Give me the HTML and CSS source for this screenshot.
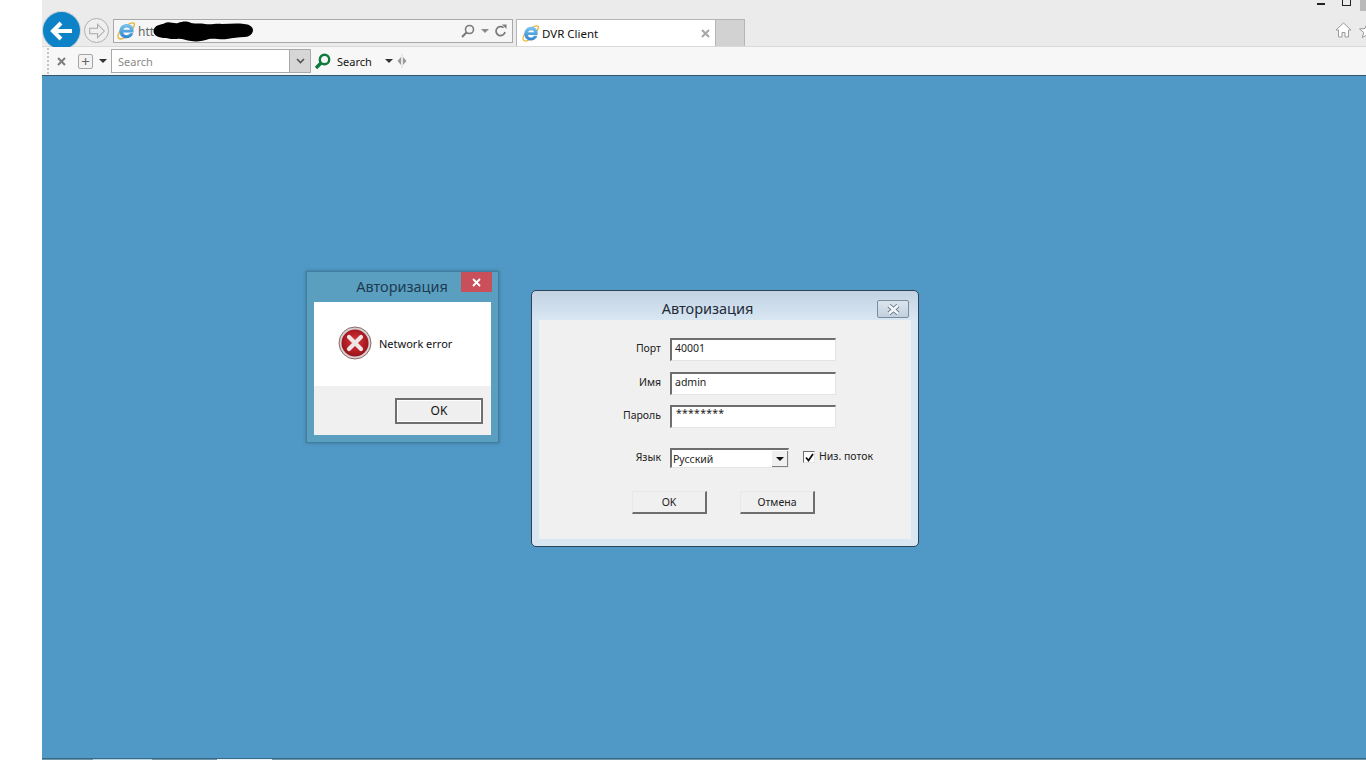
FILE: index.html
```html
<!DOCTYPE html>
<html lang="ru">
<head>
<meta charset="utf-8">
<title>DVR Client</title>
<link rel="stylesheet" href="styles.css">
</head>
<body>
<svg class="defs" width="0" height="0" aria-hidden="true">
  <defs>
    <linearGradient id="ieblue" x1="0" y1="0" x2="0" y2="1"><stop offset="0" stop-color="#7cc4ee"/><stop offset="1" stop-color="#2c86cf"/></linearGradient>
  </defs>
  <symbol id="ie" viewBox="0 0 18 18">
    <path d="M1.500 16C-.5 13.500 4 6.500 9 3.500c4-2.400 7.500-3.300 8.200-2 .6 1.100-.3 3.200-1.500 4.800" fill="none" stroke="#e6b53c" stroke-width="1.400"/>
    <path d="M1.500 16c1.400 1.500 4.500.8 6.800-.6" fill="none" stroke="#e6b53c" stroke-width="1.400"/>
    <path d="M16.500 10.500H6.300c.2 2.900 4.800 4 6.500.8h3.500c-1.500 5.500-8.600 6.300-11.700 3.200C1.500 11.500 1.800 6.300 5 3.600c3.700-3 9.700-1.700 11.200 2.400.5 1.400.5 3 .3 4.500zM6.400 7.700h6.500c-.5-3-5.700-3-6.500 0z" fill="url(#ieblue)"/>
  </symbol>
</svg>

<div class="page">
  <div class="margin"></div>
  <div class="browser">
    <div class="titlebar">
      <div class="winbuttons">
        <span class="win-min"></span>
        <span class="win-max"></span>
        <span class="win-close"></span>
      </div>
      <div class="navrow">
        <div class="nav-btns">
          <span class="back">
            <svg width="26" height="22" viewBox="0 0 26 22"><path d="M12 3l-8 8 8 8M5 11h18" fill="none" stroke="#fff" stroke-width="4"/></svg>
          </span>
          <span class="forward">
            <svg width="18" height="16" viewBox="0 0 16 14"><path d="M8.500 1l6 6-6 6V9.500H1.500v-5h7z" fill="none" stroke="#a8a8a8" stroke-width=".9"/></svg>
          </span>
        </div>
        <div class="address">
          <svg class="ie" width="18" height="18"><use href="#ie"/></svg>
          <span class="url">htt</span>
          <svg class="redact" width="101" height="23" viewBox="0 0 101 23"><path d="M1 9C3 4 9 5 12 3c4-2 9 1 13 0 5-2 10-2 13 0 5 1 10 0 14 1 6 1 12-1 17 0 7 0 14-1 22 0 5 0 9 3 9 6 0 4-4 7-8 7-7 0-12 1-18 2-7 1-12-1-18 0-6 2-12 3-18 2-5 0-9-3-14-2-4 0-8 0-11-1C4 18-1 14 1 9z" fill="#000"/></svg>
          <div class="addr-tools">
            <svg width="14" height="14" viewBox="0 0 14 14"><circle cx="8.500" cy="5.500" r="4" fill="none" stroke="#7a7a7a" stroke-width="1.600"/><path d="M5.500 8.500L1 13" stroke="#7a7a7a" stroke-width="2.200"/></svg>
            <span class="caret grey"></span>
            <svg width="12" height="14" viewBox="0 0 12 14"><path d="M10 8a4.500 4.500 0 1 1-1.500-4.300" fill="none" stroke="#7a7a7a" stroke-width="1.700"/><path d="M7 .5h4.500V5z" fill="#7a7a7a"/></svg>
          </div>
        </div>
        <div class="tab">
          <svg width="17" height="17"><use href="#ie"/></svg>
          <span class="tab-title">DVR Client</span>
          <svg class="tab-x" width="9" height="9" viewBox="0 0 9 9"><path d="M1 1l7 7M8 1L1 8" stroke="#a6a6a6" stroke-width="2"/></svg>
        </div>
        <div class="newtab"></div>
        <div class="right-icons">
          <svg width="17" height="16" viewBox="0 0 17 16"><path d="M8.500 1L1 8h2.500v7h3.500v-4.500h3V15h3.500V8H16z" fill="#fff" stroke="#9a9a9a"/></svg>
          <svg width="15" height="16" viewBox="0 0 15 16"><path d="M8 1.500l2 5 5.500.4-4.200 3.500 1.400 5.300L8 12.800l-4.700 2.900 1.400-5.300L.5 6.900 6 6.500z" fill="#fff" stroke="#9a9a9a"/></svg>
        </div>
      </div>
    </div>

    <div class="toolbar">
      <span class="grip"></span>
      <svg class="tool-x" width="9" height="9" viewBox="0 0 9 9"><path d="M1 1l7 7M8 1L1 8" stroke="#7d7d7d" stroke-width="2"/></svg>
      <span class="plus-btn">+</span>
      <span class="caret"></span>
      <div class="searchbox">
        <span class="placeholder">Search</span>
        <span class="search-drop"><svg width="9" height="6" viewBox="0 0 9 6"><path d="M1 1l3.500 3.500L8 1" fill="none" stroke="#555" stroke-width="1.600"/></svg></span>
      </div>
      <svg class="loupe" width="17" height="17" viewBox="0 0 17 17"><circle cx="10.500" cy="6.500" r="4.700" fill="none" stroke="#0f7a3c" stroke-width="2.400"/><path d="M7 10l-5 5" stroke="#0f7a3c" stroke-width="3.400"/></svg>
      <span class="search-label">Search</span>
      <span class="caret"></span>
      <svg class="resize" width="10" height="14" viewBox="0 0 10 14"><path d="M4 3v8L.5 7zM6 3v8l3.500-4z" fill="#9a9a9a"/><path d="M5 0v14" stroke="#d8d8d8"/></svg>
    </div>

    <main class="content">
      <section class="win8-dialog">
        <header class="win8-title">
          <span>Авторизация</span>
          <span class="win8-close"><svg width="9" height="9" viewBox="0 0 9 9"><path d="M1 1l7 7M8 1L1 8" stroke="#fff" stroke-width="1.800"/></svg></span>
        </header>
        <div class="win8-body">
          <div class="msg">
            <svg width="34" height="34" viewBox="0 0 34 34">
              <defs><radialGradient id="red" cx="50%" cy="45%" r="55%"><stop offset="0" stop-color="#e0353c"/><stop offset="1" stop-color="#98121a"/></radialGradient></defs>
              <circle cx="17" cy="17" r="16" fill="#d8d0d0" stroke="#8f6a6a"/>
              <circle cx="17" cy="17" r="13.500" fill="url(#red)"/>
              <path d="M11 11l12 12M23 11L11 23" stroke="#efe6e6" stroke-width="4.200" stroke-linecap="round"/>
            </svg>
            <span>Network error</span>
          </div>
          <div class="msg-foot"><button class="w8-ok">OK</button></div>
        </div>
      </section>

      <section class="aero-dialog">
        <header class="aero-title">
          <span>Авторизация</span>
          <span class="aero-close"><svg width="15" height="11" viewBox="0 0 15 11"><path d="M3 1.500l9 8M12 1.500l-9 8" stroke="#6d7a88" stroke-width="4.400"/><path d="M3 1.500l9 8M12 1.500l-9 8" stroke="#f4f7fa" stroke-width="2.600"/></svg></span>
        </header>
        <div class="aero-body">
          <div class="form">
            <label>Порт</label><div class="field">40001</div>
            <label>Имя</label><div class="field">admin</div>
            <label>Пароль</label><div class="field stars">********</div>
          </div>
          <div class="lang-row">
            <label>Язык</label>
            <div class="combo"><span class="combo-text">Русский</span><span class="combo-btn"></span></div>
            <span class="check"><svg width="9" height="9" viewBox="0 0 9 9"><path d="M1 4.500l2.500 3L8 1" fill="none" stroke="#111" stroke-width="1.800"/></svg></span>
            <span class="check-label">Низ. поток</span>
          </div>
          <div class="actions">
            <button class="xp-btn">OK</button>
            <button class="xp-btn">Отмена</button>
          </div>
        </div>
      </section>
    </main>

    <div class="statusbar">
      <span class="seg s1"></span>
      <span class="seg s2"></span>
      <span class="seg s3"></span>
      <span class="seg s4"></span>
      <span class="seg s5"></span>
    </div>
  </div>
</div>
</body>
</html>
```

FILE: styles.css
```css
* { box-sizing: border-box; }
html, body { margin: 0; padding: 0; height: 100%; background: #fff; overflow: hidden; }
body { font-family: "Noto Sans", "Open Sans", sans-serif; color: #1a1a1a; }
.defs { position: absolute; }

.page { display: flex; height: 760px; }
.margin { width: 42px; flex: none; background: #fff; }
.browser { flex: 1; display: flex; flex-direction: column; min-width: 0; position: relative; }

/* window top */
.titlebar { height: 47px; flex: none; background: #ebebeb; border-bottom: 1px solid #d9d9d9; position: relative; }
.winbuttons { position: absolute; top: 0; right: 0; display: flex; align-items: flex-start; }
.win-min { width: 8px; height: 2px; background: #222; margin: 3px 17px 0 0; }
.win-max { width: 9px; height: 6px; border: 1px solid #222; border-top: 0; margin-right: 9px; }
.win-close { width: 6px; height: 11px; background: #b9b9b9; }

.navrow { display: flex; align-items: flex-start; padding-top: 19px; height: 46px; }
.nav-btns { width: 71px; flex: none; position: relative; }
.back {
  position: absolute; left: 1px; top: -7px; width: 37px; height: 37px; border-radius: 50%;
  background: #0d82c6; box-shadow: 0 0 0 1px #c9d3da;
  display: flex; align-items: center; justify-content: center;
}
.forward {
  position: absolute; left: 42px; top: -1px; width: 25px; height: 25px; border-radius: 50%;
  border: 1px solid #b0b0b0; background: #efefef;
  display: flex; align-items: center; justify-content: center;
}
.address {
  width: 400px; height: 24px; flex: none; background: #f6f6f6; border: 1px solid #a9a9a9;
  display: flex; align-items: center; padding-left: 3px; position: relative; font-size: 12px; color: #666;
}
.url { margin-left: 3px; }
.redact { position: absolute; left: 39px; top: 0; }
.addr-tools { margin-left: auto; display: flex; align-items: center; gap: 6px; padding-right: 5px; }
.caret { width: 0; height: 0; border: 4px solid transparent; border-top: 4px solid #333; border-bottom: 0; flex: none; }
.caret.grey { border-top-color: #8a8a8a; }

.tab {
  width: 200px; height: 27px; margin-left: 3px; flex: none; background: #fff;
  border: 1px solid #b5b5b5; border-bottom: 0;
  display: flex; align-items: center; padding: 0 5px 0 5px; font-size: 11.500px; color: #111;
}
.tab-title { margin-left: 3px; }
.tab-x { margin-left: auto; }
.newtab { width: 29px; height: 27px; flex: none; background: #d2d2d2; border: 1px solid #b5b5b5; border-left: 0; border-bottom: 0; }
.right-icons { margin-left: auto; display: flex; gap: 7px; padding-top: 3px; margin-right: -8px; }

/* command bar */
.toolbar { height: 28px; flex: none; background: #f7f7f7; display: flex; align-items: center; position: relative; padding-left: 5px; font-size: 12px; }
.grip { width: 2px; height: 26px; border-left: 2px dotted #c4c4c4; flex: none; }
.tool-x { margin-left: 8px; flex: none; }
.plus-btn {
  width: 15px; height: 15px; margin-left: 12px; border: 1px solid #a5a5a5; border-radius: 2px; background: #f2f2f2;
  display: flex; align-items: center; justify-content: center; font-size: 15px; line-height: 1; color: #666; flex: none;
}
.toolbar > .caret { margin-left: 6px; }
.searchbox {
  width: 200px; height: 24px; margin-left: 4px; flex: none; background: #fff; border: 1px solid #a9a9a9;
  display: flex; align-items: center; padding-left: 6px; font-size: 11px; color: #8a8a8a;
}
.search-drop { margin-left: auto; width: 21px; height: 22px; background: #d6d6d6; border-left: 1px solid #a9a9a9; display: flex; align-items: center; justify-content: center; }
.loupe { margin-left: 3px; flex: none; }
.search-label { margin-left: 6px; font-size: 11px; color: #111; width: 43px; }
.toolbar > .search-label + .caret { margin-left: 5px; }
.resize { margin-left: 4px; flex: none; }

/* desktop area */
.content { flex: 1; background: #5098c5; border-top: 1px solid #33566e; position: relative; min-height: 0; }

.win8-dialog {
  position: absolute; left: 264px; top: 195px; width: 193px; height: 172px;
  background: #5a9fc0; border: 1px solid #3f7f9e; padding: 0 7px 7px; display: flex; flex-direction: column;
  box-shadow: 0 0 3px rgba(40, 70, 90, .5);
}
.win8-title { height: 30px; flex: none; display: flex; justify-content: center; padding: 4px 1px 0 0; font-size: 14.500px; color: #1d3b52; position: relative; }
.win8-close {
  position: absolute; right: -1px; top: 0; width: 31px; height: 20px; background: #c9505a;
  display: flex; align-items: center; justify-content: center;
}
.win8-body { flex: 1; display: flex; flex-direction: column; }
.msg { height: 84px; background: #fff; display: flex; align-items: center; gap: 7px; padding: 0 0 2px 24px; font-size: 11px; color: #111; }
.msg-foot { flex: 1; background: #f0f0f0; display: flex; justify-content: flex-end; align-items: flex-start; padding: 12px 8px 0 0; }
.w8-ok {
  width: 88px; height: 26px; background: #efefef; border: 2px solid #6f6f6f; border-radius: 0;
  box-shadow: inset 0 0 0 1px #fff; font: 12px/20px "Noto Sans", sans-serif; color: #111; padding: 0;
}

.aero-dialog {
  position: absolute; left: 489px; top: 214px; width: 388px; height: 257px;
  background: linear-gradient(#c3d3e3, #d9e7f3 30px); border: 1px solid #2d4356; border-radius: 5px;
  padding: 0 7px 7px; display: flex; flex-direction: column;
}
.aero-title { height: 29px; flex: none; display: flex; justify-content: center; padding: 7px 35px 0 0; font-size: 14.500px; color: #1e2c38; position: relative; }
.aero-close {
  position: absolute; right: 2px; top: 9px; width: 32px; height: 18px; border: 1px solid #7d8c9b; border-radius: 2px;
  background: linear-gradient(#dbe5ee, #c2d0dd); display: flex; align-items: center; justify-content: center;
}
.aero-body { flex: 1; background: #f0f0f0; font-size: 10.500px; color: #222; display: flex; flex-direction: column; padding-top: 18px; }

.form { display: grid; grid-template-columns: 122px 166px; column-gap: 9px; row-gap: 10.500px; align-items: start; }
.form label { text-align: right; padding-top: 3px; }
.field {
  height: 23px; background: #fff; border: 1px solid #e4e4e4; border-top: 2px solid #6e6e6e; border-left: 2px solid #6e6e6e;
  padding: 0 0 0 3px; line-height: 16px; font-size: 10.500px; color: #222;
}
.field.stars { line-height: 12px; padding-left: 4px; letter-spacing: .25px; }

.lang-row { display: flex; align-items: flex-start; margin-top: 20px; }
.lang-row label { width: 122px; text-align: right; padding-top: 2px; flex: none; }
.combo {
  width: 119px; height: 20px; margin-left: 9px; flex: none; background: #fff; border: 1px solid #e4e4e4;
  border-top: 2px solid #6e6e6e; border-left: 2px solid #6e6e6e; display: flex; align-items: center; padding-left: 1px; line-height: 1;
}
.combo-text { padding-top: 2px; }
.combo-btn { margin-left: auto; width: 16px; height: 16px; background: #f0f0f0; position: relative; border-right: 1px solid #808080; border-bottom: 1px solid #808080; flex: none; }
.combo-btn::after { content: ""; position: absolute; left: 4px; top: 6px; border: 4px solid transparent; border-top: 4px solid #111; border-bottom: 0; }
.check {
  width: 12px; height: 12px; margin: 3px 0 0 14px; flex: none; background: #fff; border: 1px solid #e4e4e4;
  border-top: 1px solid #6e6e6e; border-left: 1px solid #6e6e6e; display: flex; align-items: center; justify-content: center;
}
.check-label { margin-left: 4px; padding-top: 1px; }

.actions { display: flex; gap: 33px; margin: 23px 0 0 93px; }
.xp-btn {
  width: 75px; height: 23px; padding: 0 0 1px; background: #f0f0f0; border: 1px solid #e8e8e8;
  border-right: 2px solid #6e6e6e; border-bottom: 2px solid #6e6e6e; font: 10.500px "Noto Sans", sans-serif; color: #222;
}

/* bottom strip */
.statusbar { height: 2px; flex: none; background: #6f95a8; display: flex; border-top: 1px solid #3b6a85; }
.seg { height: 1px; display: block; flex: none; }
.s1 { width: 51px; }
.s2 { width: 59px; background: #b8d3e2; }
.s3 { width: 65px; }
.s4 { width: 55px; background: #e8f2f8; }
.s5 { width: 5px; }
```
